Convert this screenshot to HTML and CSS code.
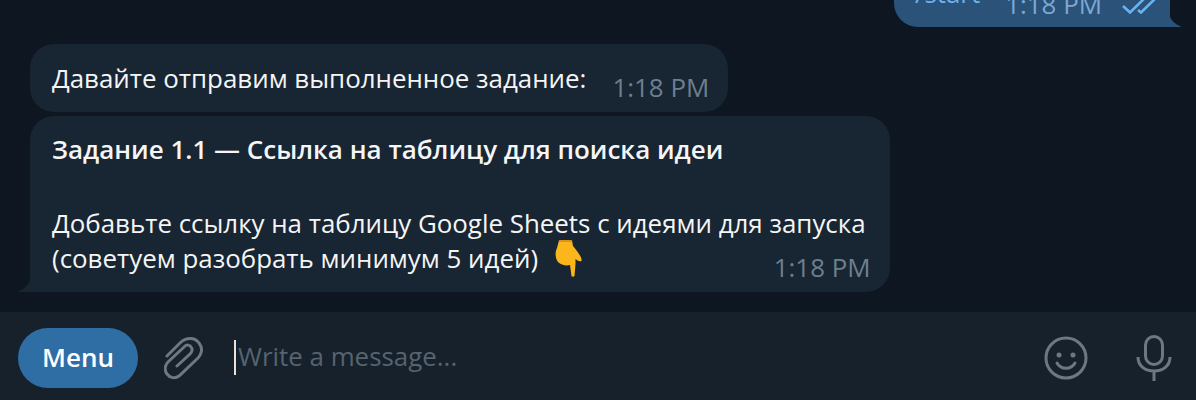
FILE: index.html
```html
<!DOCTYPE html>
<html lang="en">
<head>
  <meta charset="UTF-8">
  <title>Chat</title>
  <link rel="stylesheet" href="styles.css">
</head>
<body>
  <div class="chat">
    <div class="messages">
      <div class="bubble sent">
        <span class="text">/start</span>
        <span class="time">1:18 PM</span>
        <svg class="checks" width="40" height="22" viewBox="0 0 40 22" fill="none" stroke="#6ab3f3" stroke-width="2.6">
          <path d="M1 14l7 6.5L28 1"/>
          <path d="M16 18l3 2.5L39 1"/>
        </svg>
        <svg class="tail-right" width="14" height="20" viewBox="0 0 14 20"><path d="M0 0c0 9 4 16 12 19l1 1H0z" fill="#2b5278"/></svg>
      </div>

      <div class="bubble">
        <span class="text">Давайте отправим выполненное задание:</span>
        <span class="time">1:18 PM</span>
      </div>

      <div class="bubble task">
        <svg class="tail-left" width="13" height="20" viewBox="0 0 13 20"><path d="M13 0c0 9-4 16-12 19l-1 1h13z" fill="#182533"/></svg>
        <p class="title">Задание 1.1 — Ссылка на таблицу для поиска идеи</p>
        <p>Добавьте ссылку на таблицу Google Sheets с идеями для запуска<br>(советуем разобрать минимум 5 идей)
          <svg class="emoji" width="27" height="37" viewBox="0 0 27 37">
            <path d="M4 .5C8-.3 13-.3 17 .5L18 6c2 2 4 5 6 8 2 3 3 5 2.500 7-2.500 1-4.500-1-6-2v5l-1 12c-.5 1-2.500 1-3 0L15 25c-4 1-9 0-12-3C0 18 0 12 2 8z" fill="#fbb61c"/>
            <path d="M4 .5C8-.3 13-.3 17 .5l.2 1.500H3.800z" fill="#dc9418"/>
          </svg>
        </p>
        <span class="time">1:18 PM</span>
      </div>
    </div>

    <div class="composer">
      <button class="menu-btn">Menu</button>
      <svg class="clip" width="40" height="44" viewBox="0 0 40 44" fill="none" stroke="#6d7883" stroke-width="3" stroke-linecap="round">
        <path d="M3 20L16 7c6-6 15-6 19 0 4 5 3 11-1 15L15 40c-4 3-9 2-12-2-3-4-2-9 1-12l16-15c3-3 6-2 7 0 2 2 1 5-1 7L13 30"/>
      </svg>
      <div class="input"><span class="caret"></span><span class="placeholder">Write a message...</span></div>
      <svg class="smile" width="44" height="44" viewBox="0 0 44 44" fill="none" stroke="#6d7883" stroke-width="3" stroke-linecap="round">
        <circle cx="22" cy="22" r="20"/>
        <circle cx="15" cy="19" r="2.500" fill="#6d7883" stroke="none"/>
        <circle cx="29" cy="19" r="2.500" fill="#6d7883" stroke="none"/>
        <path d="M13 27c4 7 14 7 18 0"/>
      </svg>
      <svg class="mic" width="36" height="46" viewBox="0 0 36 46" fill="none" stroke="#6d7883" stroke-width="3">
        <rect x="9.500" y="1.500" width="17" height="28" rx="8.500"/>
        <path d="M2 22c0 9 7 14 16 14s16-5 16-14M18 36v10"/>
      </svg>
    </div>
  </div>
</body>
</html>
```

FILE: styles.css
```css
* {
  margin: 0;
  padding: 0;
  box-sizing: border-box;
}

html, body {
  height: 100%;
  overflow: hidden;
}

body {
  font-family: "Open Sans", sans-serif;
  font-size: 25.9px;
  background: #0e1621;
  color: #f5f5f5;
}

.chat {
  height: 400px;
  display: flex;
  flex-direction: column;
}

.messages {
  height: 312px;
  padding: 0 26px 20px 30px;
  display: flex;
  flex-direction: column;
  justify-content: flex-end;
  align-items: flex-start;
  gap: 4px;
  overflow: hidden;
}

.bubble {
  position: relative;
  display: flex;
  flex-shrink: 0;
  background: #182533;
  border-radius: 24px;
  padding: 17px 19px 0 22px;
  height: 68px;
}

.bubble .text {
  line-height: 34px;
  white-space: nowrap;
}

.time {
  color: #6d7f8f;
  line-height: 30px;
  margin-left: 26px;
  padding-top: 11px;
  white-space: nowrap;
}

.sent {
  align-self: flex-end;
  background: #2b5278;
  color: #6ab3f3;
  border-radius: 24px 24px 0 24px;
  margin-bottom: 13px;
  padding-left: 21px;
  padding-right: 8px;
}

.sent .time {
  color: #7da8d3;
  margin-left: 25px;
  padding-top: 13px;
}

.checks {
  margin: 16px 0 0 20px;
}

.tail-right {
  position: absolute;
  right: -12px;
  bottom: 0;
}

.task {
  display: block;
  height: 176px;
  border-radius: 24px 24px 24px 0;
  padding: 16px 24px 0 22px;
}

.task p {
  line-height: 34px;
}

.task .title {
  font-size: 26px;
  font-weight: 600;
  margin-bottom: 40px;
}

.task .time {
  position: absolute;
  right: 19px;
  bottom: 10px;
  margin: 0;
  padding: 0;
}

.tail-left {
  position: absolute;
  left: -12px;
  bottom: 0;
}

.emoji {
  vertical-align: -9px;
  margin-left: 10px;
}

.composer {
  height: 88px;
  background: #17212b;
  display: flex;
  align-items: center;
  padding: 4px 24px 0 18px;
}

.menu-btn {
  width: 120px;
  height: 60px;
  border: none;
  border-radius: 30px;
  background: #2f6ea5;
  color: #fff;
  font-family: inherit;
  font-size: 26px;
  font-weight: 600;
  padding-bottom: 2px;
}

.clip {
  margin-left: 26px;
}

.input {
  flex: 1;
  margin-left: 30px;
  display: flex;
  align-items: center;
  gap: 2px;
}

.caret {
  width: 2px;
  height: 35px;
  margin-bottom: 2px;
  background: #e8e2d8;
}

.placeholder {
  color: #566370;
  padding-bottom: 4px;
}

.smile {
  margin-right: 48px;
}
```
